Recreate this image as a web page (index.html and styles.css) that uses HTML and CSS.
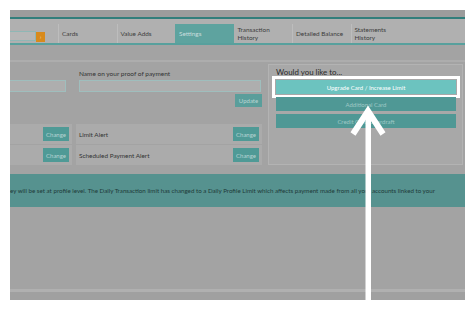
FILE: index.html
```html
<!DOCTYPE html>
<html>
<head>
<meta charset="utf-8">
<link rel="stylesheet" href="styles.css">
</head>
<body>
<div class="screen">
  <div class="top"></div>
  <nav class="nav">
    <div class="search"><span class="sbox"></span><span class="sbtn">›</span></div>
    <div class="item">Cards</div>
    <div class="item">Value Adds</div>
    <div class="item active">Settings</div>
    <div class="item">Transaction<br>History</div>
    <div class="item">Detailed Balance</div>
    <div class="item">Statements<br>History</div>
  </nav>
  <div class="main">
    <div class="left">
      <div class="form">
        <div class="fcol narrow">
          <div class="label">&nbsp;</div>
          <div class="input"></div>
        </div>
        <div class="fcol wide">
          <div class="label">Name on your proof of payment</div>
          <div class="input"></div>
          <div class="upd"><span class="btn update">Update</span></div>
        </div>
      </div>
      <div class="alerts">
        <div class="arow">
          <div class="cell c1"><span class="btn change">Change</span></div>
          <div class="cell c2"><span class="atext">Limit Alert</span><span class="btn change">Change</span></div>
        </div>
        <div class="arow">
          <div class="cell c1"><span class="btn change">Change</span></div>
          <div class="cell c2"><span class="atext">Scheduled Payment Alert</span><span class="btn change">Change</span></div>
        </div>
      </div>
    </div>
    <aside class="panel">
      <div class="ptitle">Would you like to...</div>
      <div class="pbtn hl">Upgrade Card / Increase Limit</div>
      <div class="pbtn">Additional Card</div>
      <div class="pbtn">Credit Card Overdraft</div>
    </aside>
  </div>
  <div class="banner">ey will be set at profile level. The Daily Transaction limit has changed to a Daily Profile Limit which affects payment made from all your accounts linked to your</div>
  <div class="foot"></div>
  <svg class="arrow" width="455" height="290" viewBox="0 0 455 290">
    <rect x="355.5" y="102" width="5.5" height="190" fill="#fff"/>
    <polyline points="343,124 358,101 373,124" fill="none" stroke="#fff" stroke-width="6" stroke-linejoin="miter"/>
  </svg>
</div>
</body>
</html>
```
FILE: styles.css
```css
html, body { margin: 0; padding: 0; background: #fff; }
body { font-family: Lato, "Open Sans", sans-serif; color: #333; }
.screen {
  margin: 10px;
  width: 455px;
  height: 290px;
  position: relative;
  overflow: hidden;
  background: #a3a3a3;
  display: flex;
  flex-direction: column;
}
.top { height: 7px; background: #9c9c9c; flex: none; }
.nav {
  flex: none;
  height: 24px;
  border-top: 2px solid #327e7b;
  border-bottom: 2px solid #58a09d;
  background: #b0b0b0;
  display: flex;
  font-size: 6.4px;
  line-height: 7.5px;
  color: #3d3d3d;
}
.search { width: 48px; display: flex; align-items: flex-start; padding-top: 12px; box-sizing: border-box; }
.sbox { width: 26px; height: 10px; box-sizing: border-box; border: 1px solid #8fb7b5; border-left: none; background: #b6b6b6; }
.sbtn { width: 9px; height: 10px; margin-top: 1px; background: #d88a1c; color: #f0d0a0; font-size: 6px; line-height: 10px; text-align: center; }
.item {
  width: 58.5px;
  margin-top: 5px;
  box-sizing: border-box;
  border-left: 1px solid #bdbdbd;
  padding-left: 3px;
  display: flex;
  align-items: center;
}
.item.active { background: #5ea39f; color: #c9dedd; border-left-color: #5ea39f; }
.item.active + .item { border-left-color: transparent; }
.main {
  flex: none;
  margin-top: 15px;
  border-top: 2px solid #adadad;
  height: 103px;
  display: flex;
  gap: 6px;
}
.left { width: 252px; display: flex; flex-direction: column; }
.form { display: flex; gap: 13px; padding-top: 7px; height: 45px; }
.fcol.narrow { width: 56px; }
.fcol.wide { width: 182px; }
.label { font-size: 6.5px; line-height: 9px; margin-bottom: 2px; color: #333; }
.input { height: 12px; box-sizing: border-box; border: 1px solid #9fbebd; background: #aeaeae; }
.narrow .input { border-left: none; }
.upd { display: flex; justify-content: flex-end; margin-top: 2px; margin-right: -1px; }
.btn { background: #4f9a96; color: #b9d5d3; font-size: 6px; display: flex; align-items: center; justify-content: center; }
.update { width: 27px; height: 13px; background: #5a9e9b; }
.alerts { margin-top: 17px; display: flex; flex-direction: column; gap: 1px; }
.arow { display: flex; gap: 4px; height: 20px; }
.cell { background: #ababab; display: flex; align-items: center; justify-content: space-between; box-sizing: border-box; }
.c1 { width: 62px; justify-content: flex-end; padding-right: 3px; }
.c2 { width: 186px; padding-left: 3px; padding-right: 3px; }
.atext { font-size: 6.4px; color: #333; }
.change { width: 26px; height: 14px; }
.panel {
  width: 195px;
  margin-top: 2px;
  box-sizing: border-box;
  border: 1px solid #b3b3b3;
  background: #a8a8a8;
  padding: 2px 6px 0 7px;
  display: flex;
  flex-direction: column;
  gap: 3px;
}
.ptitle { font-size: 7.9px; line-height: 11px; color: #2a2a2a; margin-bottom: -1px; }
.pbtn { height: 14px; background: #4f9895; color: #9fc9c6; font-size: 6px; display: flex; align-items: center; justify-content: center; }
.pbtn.hl { background: #6cc3bf; color: #fff; outline: 3px solid #fff; outline-offset: 1px; }
.banner {
  flex: none;
  margin-top: 9px;
  height: 33px;
  background: #56928f;
  color: #1e3a39;
  font-size: 6.2px;
  line-height: 33px;
  white-space: nowrap;
  overflow: hidden;
}
.foot { margin-top: auto; height: 8px; border-top: 3px solid #b0b0b0; background: #a0a0a0; flex: none; }
.arrow { position: absolute; left: 0; top: 0; pointer-events: none; }
```
